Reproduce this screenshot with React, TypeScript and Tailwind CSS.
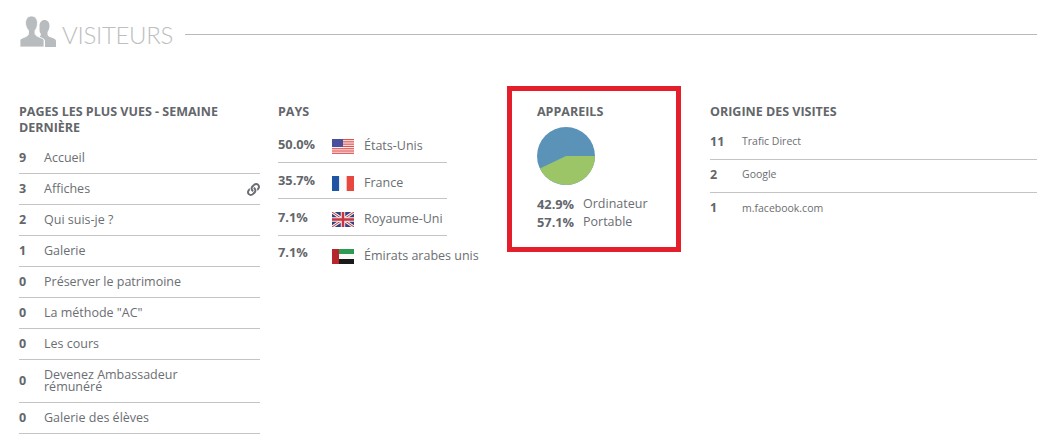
import React from "react";
import { FaLink } from "react-icons/fa";

const pages: [string, string][] = [
  ["9", "Accueil"],
  ["3", "Affiches"],
  ["2", "Qui suis-je ?"],
  ["1", "Galerie"],
  ["0", "Préserver le patrimoine"],
  ["0", 'La méthode "AC"'],
  ["0", "Les cours"],
  ["0", "Devenez Ambassadeur rémunéré"],
  ["0", "Galerie des élèves"],
];

function Us() {
  const stripes = [];
  for (let i = 0; i < 7; i++) stripes.push(<rect key={i} x="0" y={i * 2.29} width="22" height="1.14" fill="#e2504c" />);
  return (
    <svg width="22" height="15" viewBox="0 0 22 15">
      <rect width="22" height="15" fill="#f5eeee" />
      {stripes}
      <rect width="11" height="8" fill="#4a4f9c" />
    </svg>
  );
}
function Fr() {
  return (
    <svg width="22" height="15" viewBox="0 0 22 15">
      <rect width="7.3" height="15" fill="#1f55a4" />
      <rect x="7.3" width="7.4" height="15" fill="#fafafa" />
      <rect x="14.7" width="7.3" height="15" fill="#e8473f" />
    </svg>
  );
}
function Uk() {
  return (
    <svg width="22" height="15" viewBox="0 0 22 15">
      <rect width="22" height="15" fill="#34407f" />
      <path d="M0 0L22 15M22 0L0 15" stroke="#f3eeee" strokeWidth="3" />
      <path d="M0 0L22 15M22 0L0 15" stroke="#c8343f" strokeWidth="1" />
      <path d="M11 0V15M0 7.5H22" stroke="#f3eeee" strokeWidth="4.5" />
      <path d="M11 0V15M0 7.5H22" stroke="#c8343f" strokeWidth="2.5" />
    </svg>
  );
}
function Ae() {
  return (
    <svg width="22" height="15" viewBox="0 0 22 15">
      <rect width="22" height="5" fill="#2f9a52" />
      <rect y="5" width="22" height="5" fill="#fafafa" />
      <rect y="10" width="22" height="5" fill="#1a1a1a" />
      <rect width="7" height="15" fill="#b5272d" />
    </svg>
  );
}

const countries: [string, React.ReactNode, string][] = [
  ["50.0%", <Us />, "États-Unis"],
  ["35.7%", <Fr />, "France"],
  ["7.1%", <Uk />, "Royaume-Uni"],
  ["7.1%", <Ae />, "Émirats arabes unis"],
];

const origins: [string, string][] = [
  ["11", "Trafic Direct"],
  ["2", "Google"],
  ["1", "m.facebook.com"],
];

function Title({ children }: { children: React.ReactNode }) {
  return <h3 className="text-[12.500px] leading-[16px] font-bold text-[#63666b] uppercase">{children}</h3>;
}

export default function App() {
  return (
    <div className="w-[1047px] h-[435px] overflow-hidden bg-white pl-[19px] pr-[10px] font-['Open_Sans',sans-serif] text-[#63666b]">
      <div className="flex items-center h-[68px]">
        <svg width="36" height="31" viewBox="0 0 36 31" className="ml-[1px] mr-[6px] -mt-[5px] shrink-0">
          <path fill="#b9bcbf" d="M24.500 4c3 0 5 2.300 5 5.800 0 2.600-.8 4.700-2 6.200v2.500c0 1.300 1 2 3 2.800 3 1.100 5.500 2 5.500 3.500V31H25v-6c0-1.500-1.500-2.500-4-3.500l-1-.5v-1c1.500-.5 1-2 0-3.500-.6-1-.5-3-.5-6.500 0-3.500 2-6 5-6z" />
          <path fill="#b9bcbf" stroke="#fff" strokeWidth="0.8" d="M11.500 0c3.600 0 6 2.800 6 7 0 3.200-1 5.800-2.500 7.500v3c0 1.500 1.500 2.500 4 3.500 3 1.200 5 2 5 3.500V31H0v-6.500c0-1.500 2-2.300 5-3.500 2.500-1 3.500-2 3.500-3.500v-3C7 12.800 5.500 10.200 5.500 7c0-4.200 2.400-7 6-7z" />
        </svg>
        <span className="font-['Lato',sans-serif] font-light text-[24px] leading-none text-[#bcbec0] tracking-[-0.3px] mt-[2px]">VISITEURS</span>
        <div className="ml-[12px] grow border-t border-[#b9b9b9]" />
      </div>

      <div className="flex items-start mt-[36px]">
        <div className="w-[241px] shrink-0">
          <Title>Pages les plus vues - semaine dernière</Title>
          <ul className="mt-[7px]">
            {pages.map(([n, label]) => (
              <li key={label} className="flex items-center border-b border-[#c4c4c4] text-[12.500px] leading-[12px] py-[9px]">
                <span className="w-[25px] shrink-0 font-bold">{n}</span>
                <span className="w-[160px] font-normal text-[#6b6e72]">{label}</span>
                {label === "Affiches" && <FaLink className="ml-auto -my-[1px] text-[13px] text-[#6b6e72]" />}
              </li>
            ))}
          </ul>
        </div>

        <div className="w-[229px] ml-[18px] shrink-0">
          <Title>Pays</Title>
          <ul className="mt-[6px]">
            {countries.map(([p, flag, name], i) => (
              <li key={name} className={`flex w-[169px] h-[36.500px] items-center whitespace-nowrap text-[12.500px] pt-[6px] ${i < 3 ? "border-b border-[#c4c4c4]" : ""}`}>
                <span className={`w-[54px] shrink-0 font-bold text-[12.800px] ${i < 3 ? "-mt-[5px]" : "-mt-[8px]"}`}>{p}</span>
                <span className="w-[32px] shrink-0">{flag}</span>
                <span className="text-[#6b6e72]">{name}</span>
              </li>
            ))}
          </ul>
        </div>

        <div className="w-[174px] h-[166px] -mt-[18px] shrink-0 border-[5px] border-[#e41e2b] pl-[25px] pt-[13px]">
          <Title>Appareils</Title>
          <svg width="58" height="58" viewBox="-29 -29 58 58" className="mt-[7px]">
            <circle r="29" fill="#5b93b8" />
            <path d="M0 0L29 0A29 29 0 0 1 -26.100 12.500Z" fill="#9bc566" />
          </svg>
          <div className="mt-[10px] text-[12.500px] leading-[18px]">
            <div className="flex"><span className="w-[46px] font-bold text-[12.800px]">42.9%</span><span className="text-[#6b6e72]">Ordinateur</span></div>
            <div className="flex"><span className="w-[46px] font-bold text-[12.800px]">57.1%</span><span className="text-[#6b6e72]">Portable</span></div>
          </div>
        </div>

        <div className="w-[327px] ml-[29px] shrink-0">
          <Title>Origine des visites</Title>
          <ul className="mt-[7px]">
            {origins.map(([n, label], i) => (
              <li key={label} className={`flex items-center h-[33px] pb-[2px] ${i < 2 ? "border-b border-[#c4c4c4]" : ""}`}>
                <span className="w-[32px] text-[12.500px] font-bold">{n}</span>
                <span className="text-[10.500px] text-[#6b6e72]">{label}</span>
              </li>
            ))}
          </ul>
        </div>
      </div>
    </div>
  );
}
